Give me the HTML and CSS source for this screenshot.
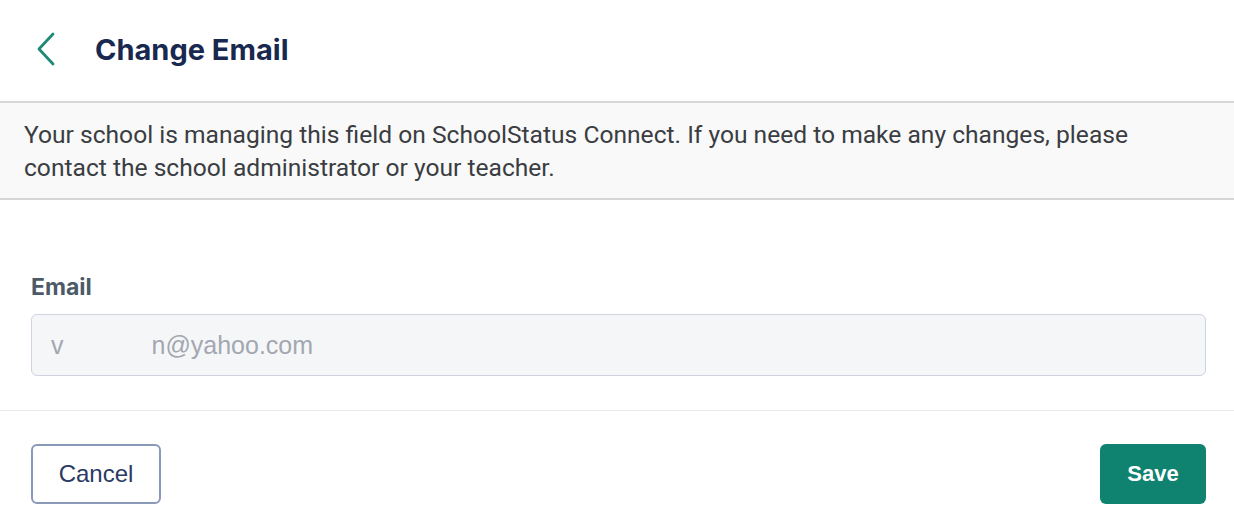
FILE: index.html
```html
<!DOCTYPE html>
<html lang="en">
<head>
<meta charset="utf-8">
<title>Change Email</title>
<link rel="stylesheet" href="styles.css">
</head>
<body>
<div class="page">
  <header class="header">
    <button class="back" aria-label="Back">
      <svg width="24" height="34" viewBox="0 0 24 34"><path d="M18 2 L4 17 L18 32" fill="none" stroke="#1e8a75" stroke-width="2.8" stroke-linecap="round" stroke-linejoin="round"/></svg>
    </button>
    <h1 class="title">Change Email</h1>
  </header>
  <div class="notice">Your school is managing this field on SchoolStatus Connect. If you need to make any changes, please contact the school administrator or your teacher.</div>
  <section class="form">
    <label class="label" for="email">Email</label>
    <div class="input" id="email"><span>v</span><span class="masked">n@yahoo.com</span></div>
  </section>
  <footer class="footer">
    <button class="btn btn-cancel">Cancel</button>
    <button class="btn btn-save">Save</button>
  </footer>
</div>
</body>
</html>
```

FILE: styles.css
```css
html, body {
  margin: 0;
  padding: 0;
  background: #ffffff;
}
.page {
  width: 1234px;
  height: 532px;
  background: #ffffff;
  overflow: hidden;
}
.header {
  display: flex;
  align-items: center;
  border-bottom: 2px solid #d8d8d8;
  box-sizing: border-box;
  height: 103px;
  padding-left: 35px;
}
.back {
  background: none;
  border: 0;
  padding: 0;
  width: 24px;
  height: 34px;
  margin-top: -3px;
  display: flex;
}
.title {
  margin: -3px 0 0 36px;
  font-family: Inter, "Noto Sans", sans-serif;
  font-weight: 700;
  font-size: 29px;
  color: #18284f;
}
.notice {
  background: #f9f9f9;
  border-bottom: 2px solid #d6d6d6;
  padding: 15px 24px 14px 24px;
  font-family: Roboto, "Noto Sans", sans-serif;
  font-size: 24.6px;
  line-height: 33px;
  color: #3a3d42;
}
.form {
  padding: 74px 28px 34px 31px;
  border-bottom: 1px solid #e8e8e8;
}
.label {
  display: block;
  font-family: Inter, "Noto Sans", sans-serif;
  font-weight: 700;
  font-size: 23px;
  line-height: 26px;
  color: #4b5a66;
  margin-bottom: 14px;
}
.input {
  height: 62px;
  box-sizing: border-box;
  border: 1.5px solid #cfd3df;
  border-radius: 6px;
  background: #f5f6f8;
  padding: 0 19px;
  display: flex;
  align-items: center;
  font-family: "Liberation Sans", Arial, sans-serif;
  font-size: 25px;
  color: #a3a7b0;
}
.masked {
  margin-left: 88px;
}
.footer {
  display: flex;
  justify-content: space-between;
  padding: 33px 28px 0 31px;
}
.btn {
  height: 60px;
  border-radius: 6px;
  font-family: "Liberation Sans", Arial, sans-serif;
  font-size: 24px;
  cursor: pointer;
}
.btn-cancel {
  width: 130px;
  background: #ffffff;
  border: 2px solid #8a99ba;
  color: #2a3a62;
}
.btn-save {
  width: 106px;
  background: #0f8270;
  border: 0;
  color: #ffffff;
  font-weight: 700;
  font-size: 22px;
}
```
